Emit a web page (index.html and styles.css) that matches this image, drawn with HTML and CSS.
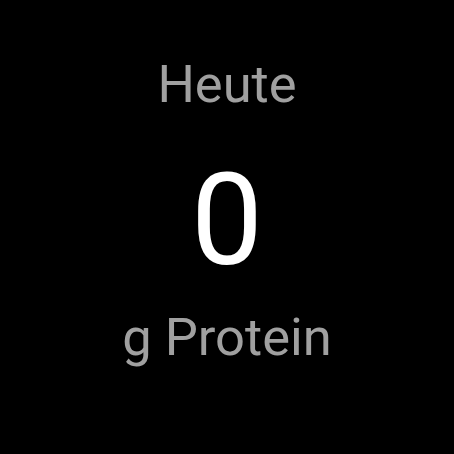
FILE: index.html
```html
<!DOCTYPE html>
<html lang="de">
<head>
    <meta charset="UTF-8">
    <meta name="viewport" content="width=device-width, initial-scale=1.0">
    <title>Protein</title>
    <link rel="stylesheet" href="styles.css">
</head>
<body>
    <div class="tile">
        <div class="label">Heute</div>
        <div class="value">0</div>
        <div class="label unit">g Protein</div>
    </div>
</body>
</html>
```

FILE: styles.css
```css
:root {
    --color-bg: #000000;
    --color-label: #a0a0a0;
    --color-value: #ffffff;
}

body {
    margin: 0;
    width: 454px;
    height: 454px;
    background: var(--color-bg);
    font-family: Roboto, 'Noto Sans', sans-serif;
    overflow: hidden;
}

.tile {
    display: flex;
    flex-direction: column;
    align-items: center;
    padding-top: 58px;
}

.label {
    color: var(--color-label);
    font-size: 52.5px;
    line-height: 52px;
}

.value {
    color: var(--color-value);
    font-size: 128px;
    line-height: 128px;
    margin-top: 46px;
}

.unit {
    margin-top: 27px;
}
```
